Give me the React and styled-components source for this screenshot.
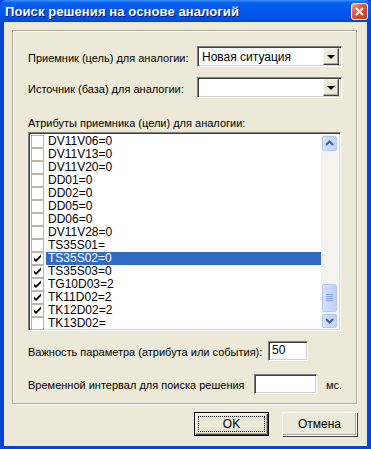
import styled, { createGlobalStyle } from 'styled-components';

const Global = createGlobalStyle`
  html, body { margin: 0; padding: 0; background: #fff; }
  body { font-family: Tahoma, "Liberation Sans", Arial, sans-serif; font-size: 11px; color: #000; }
`;

const SWindow = styled.div`
  width: 371px;
  height: 449px;
  display: flex;
  flex-direction: column;
  box-sizing: border-box;
  background: #0842d8;
`;

const STitleBar = styled.div`
  height: 22px;
  flex-shrink: 0;
  display: flex;
  align-items: center;
  justify-content: space-between;
  padding: 0 3px 0 5px;
  background: linear-gradient(#3d95ff 0%, #0a5fef 12%, #0058ee 45%, #0254e8 75%, #0048d8 100%);
  border-radius: 6px 6px 0 0;
  .title {
    color: #fff;
    font-family: "Liberation Sans", Arial, sans-serif;
    font-weight: bold;
    font-size: 13px;
    letter-spacing: 0.1px;
    text-shadow: 1px 1px 0 #0a1e7a;
  }
`;

const SCloseButton = styled.div`
  width: 15px;
  height: 15px;
  margin-top: 1px;
  border: 1px solid #fff;
  border-radius: 3px;
  background: linear-gradient(135deg, #f2a387 0%, #e2532e 45%, #c1381a 100%);
  display: flex;
  align-items: center;
  justify-content: center;
`;

const SBody = styled.div`
  flex: 1;
  margin: 0 4px 3px 4px;
  background: #ece9d8;
  display: flex;
  flex-direction: column;
  padding: 8px 10px 0 8px;
`;

const SGroup = styled.div`
  border: 1px solid #aca899;
  box-shadow: inset 1px 1px 0 #fff, 1px 1px 0 #fff;
  height: 374px;
  box-sizing: border-box;
  padding: 15px 14px 0 15px;
  display: flex;
  flex-direction: column;
`;

const SRow = styled.div`
  display: flex;
  align-items: center;
  height: 21px;
  margin-top: ${(p) => p.$mt || 0}px;
  margin-bottom: ${(p) => p.$mb || 0}px;
  .label {
    width: ${(p) => p.$labelWidth || 169}px;
    flex-shrink: 0;
    white-space: nowrap;
    padding-top: 2px;
  }
  .unit {
    margin-left: 9px;
    padding-top: 2px;
  }
`;

const SSunken = styled.div`
  background: #fff;
  box-sizing: border-box;
  border-top: 1px solid #808080;
  border-left: 1px solid #808080;
  border-right: 1px solid #fff;
  border-bottom: 1px solid #fff;
  box-shadow: inset 1px 1px 0 #404040, inset -1px -1px 0 #d4d0c8;
`;

const SCombo = styled(SSunken)`
  width: 146px;
  height: 21px;
  display: flex;
  align-items: center;
  justify-content: space-between;
  padding: 2px;
  .value {
    padding-left: 2px;
    font-size: 12px;
  }
`;

const SDropButton = styled.div`
  width: 16px;
  height: 17px;
  box-sizing: border-box;
  background: #ece9d8;
  border-top: 1px solid #f5f4ef;
  border-left: 1px solid #f5f4ef;
  border-right: 1px solid #404040;
  border-bottom: 1px solid #404040;
  box-shadow: inset -1px -1px 0 #aca899;
  display: flex;
  align-items: center;
  justify-content: center;
  &::after {
    content: '';
    border-left: 4px solid transparent;
    border-right: 4px solid transparent;
    border-top: 4px solid #000;
    margin-top: 1px;
  }
`;

const SListLabel = styled.div`
  margin-top: 19px;
  white-space: nowrap;
  height: 15px;
`;

const SList = styled(SSunken)`
  width: 313px;
  height: 199px;
  display: flex;
  padding: 2px;
`;

const SItems = styled.div`
  flex: 1;
  display: flex;
  flex-direction: column;
`;

const SItem = styled.div`
  height: 13px;
  display: flex;
  align-items: center;
  .text {
    flex: 1;
    height: 13px;
    line-height: 13px;
    margin-left: 2px;
    padding-left: 2px;
    font-size: 12px;
    white-space: nowrap;
    background: ${(p) => (p.$selected ? '#316ac5' : 'transparent')};
    color: ${(p) => (p.$selected ? '#fff' : '#000')};
  }
`;

const SCheck = styled.div`
  width: 13px;
  height: 13px;
  box-sizing: border-box;
  border: 1px solid #b9b6a8;
  background: #fff;
  display: flex;
  align-items: center;
  justify-content: center;
`;

const SScrollbar = styled.div`
  width: 17px;
  background: #f4f3ee;
  display: flex;
  flex-direction: column;
  align-items: center;
  padding-top: 1px;
  box-sizing: border-box;
`;

const SScrollBtn = styled.div`
  width: 15px;
  height: ${(p) => p.$h || 15}px;
  margin-top: ${(p) => p.$mt || 0}px;
  box-sizing: border-box;
  border: 1px solid #b5c8f4;
  border-radius: 2px;
  background: linear-gradient(90deg, #d5e2fc, #bdd0f9);
  display: flex;
  align-items: center;
  justify-content: center;
`;

const SInput = styled(SSunken)`
  width: ${(p) => p.$w}px;
  height: 20px;
  padding: 1px 3px;
  font-size: 12px;
`;

const SButtons = styled.div`
  display: flex;
  justify-content: flex-end;
  gap: 13px;
  margin-top: 8px;
`;

const SButton = styled.div`
  width: 75px;
  height: 24px;
  box-sizing: border-box;
  background: #ece9d8;
  border: 1px solid ${(p) => (p.$default ? '#000' : '#fff')};
  box-shadow: ${(p) =>
    p.$default
      ? 'inset 1px 1px 0 #fff, inset -1px -1px 0 #404040, inset -2px -2px 0 #aca899'
      : 'inset -1px -1px 0 #aca899, 1px 1px 0 #404040'};
  display: flex;
  align-items: center;
  justify-content: center;
  font-size: 12px;
  position: relative;
  ${(p) => (p.$default ? '&::before { content: ""; position: absolute; inset: 3px; border: 1px dotted #000; }' : '')}
`;

const items = [
  ['DV11V06=0', false],
  ['DV11V13=0', false],
  ['DV11V20=0', false],
  ['DD01=0', false],
  ['DD02=0', false],
  ['DD05=0', false],
  ['DD06=0', false],
  ['DV11V28=0', false],
  ['TS35S01=', false],
  ['TS35S02=0', true, true],
  ['TS35S03=0', true],
  ['TG10D03=2', true],
  ['TK11D02=2', true],
  ['TK12D02=2', true],
  ['TK13D02=', false],
];

const CheckMark = () => (
  <svg width="9" height="9" viewBox="0 0 9 9">
    <path d="M1 3.5 L3 5.5 L8 0.5 L8 3 L3 8 L1 6 Z" fill="#000" />
  </svg>
);

const Arrow = ({ up }) => (
  <svg width="9" height="6" viewBox="0 0 9 6">
    <path d={up ? 'M1 5 L4.5 1.5 L8 5' : 'M1 1 L4.5 4.5 L8 1'} fill="none" stroke="#4d6185" strokeWidth="2" />
  </svg>
);

const App = () => {
  return (
    <>
      <Global />
      <SWindow>
        <STitleBar>
          <span className="title">Поиск решения на основе аналогий</span>
          <SCloseButton>
            <svg width="9" height="9" viewBox="0 0 9 9">
              <path d="M1 1 L8 8 M8 1 L1 8" stroke="#fff" strokeWidth="2" />
            </svg>
          </SCloseButton>
        </STitleBar>
        <SBody>
          <SGroup>
            <SRow $mb={10}>
              <span className="label">Приемник (цель) для аналогии:</span>
              <SCombo>
                <span className="value">Новая ситуация</span>
                <SDropButton />
              </SCombo>
            </SRow>
            <SRow>
              <span className="label">Источник (база) для аналогии:</span>
              <SCombo>
                <span className="value"></span>
                <SDropButton />
              </SCombo>
            </SRow>
            <SListLabel>Атрибуты приемника (цели) для аналогии:</SListLabel>
            <SList>
              <SItems>
                {items.map(([name, checked, selected]) => (
                  <SItem key={name} $selected={selected}>
                    <SCheck>{checked && <CheckMark />}</SCheck>
                    <span className="text">{name}</span>
                  </SItem>
                ))}
              </SItems>
              <SScrollbar>
                <SScrollBtn>
                  <Arrow up />
                </SScrollBtn>
                <SScrollBtn $h={29} $mt={133}>
                  <svg width="7" height="7" viewBox="0 0 7 7">
                    <path d="M0 0.5 H7 M0 2.5 H7 M0 4.5 H7 M0 6.5 H7" stroke="#8aa3e0" />
                  </svg>
                </SScrollBtn>
                <SScrollBtn $mt={2}>
                  <Arrow />
                </SScrollBtn>
              </SScrollbar>
            </SList>
            <SRow $labelWidth={240} $mt={9}>
              <span className="label">Важность параметра (атрибута или события):</span>
              <SInput $w={40}>50</SInput>
            </SRow>
            <SRow $labelWidth={226} $mt={12}>
              <span className="label">Временной интервал для поиска решения</span>
              <SInput $w={63} />
              <span className="unit">мс.</span>
            </SRow>
          </SGroup>
          <SButtons>
            <SButton $default>OK</SButton>
            <SButton>Отмена</SButton>
          </SButtons>
        </SBody>
      </SWindow>
    </>
  );
};

export default App;
